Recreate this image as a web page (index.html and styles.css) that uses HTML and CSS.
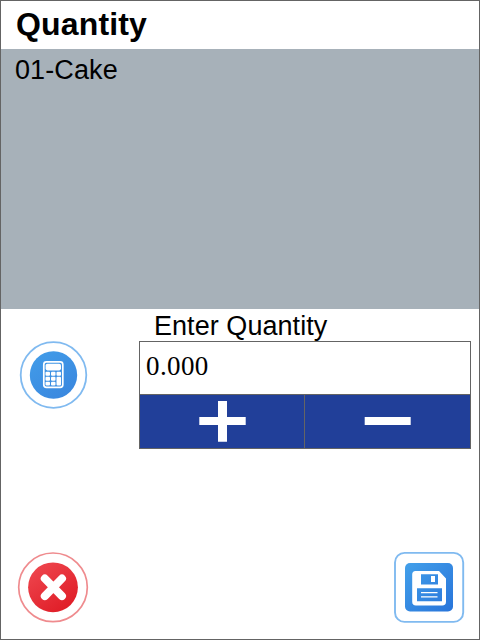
FILE: index.html
```html
<!DOCTYPE html>
<html lang="en">
<head>
<meta charset="utf-8">
<title>Quantity</title>
<link rel="stylesheet" href="styles.css">
</head>
<body>
<main class="screen">
  <h1 class="title">Quantity</h1>
  <section class="item">01-Cake</section>
  <section class="entry">
    <button class="icon-button calc" aria-label="Calculator">
      <svg width="70" height="70" viewBox="0 0 70 70">
        <defs><linearGradient id="blue" x1="0" y1="0" x2="0.7" y2="1"><stop offset="0" stop-color="#429de9"/><stop offset="1" stop-color="#3a88df"/></linearGradient></defs>
        <circle cx="34.5" cy="35" r="32.8" fill="#fff" stroke="#80baf0" stroke-width="1.8"/>
        <circle cx="34.5" cy="35" r="23.7" fill="url(#blue)"/>
        <rect x="24.8" y="21.8" width="19" height="25.6" rx="2.6" fill="none" stroke="#fff" stroke-width="1.7"/>
        <g fill="#fff">
          <rect x="26.6" y="23.8" width="15.4" height="6.6" rx="1.8"/>
          <rect x="26.5" y="31.8" width="4.5" height="4" rx="1"/><rect x="32" y="31.8" width="4.5" height="4" rx="1"/><rect x="37.5" y="31.8" width="4.5" height="4" rx="1"/>
          <rect x="26.5" y="36.8" width="4.5" height="4" rx="1"/><rect x="32" y="36.8" width="4.5" height="4" rx="1"/><rect x="37.5" y="36.8" width="4.5" height="8.800" rx="1"/>
          <rect x="26.5" y="41.800" width="4.500" height="3.800" rx="1"/><rect x="32" y="41.800" width="4.500" height="3.800" rx="1"/>
        </g>
      </svg>
    </button>
    <div class="field">
      <label class="label" for="qty">Enter Quantity</label>
      <div class="box">
        <div class="value" id="qty">0.000</div>
        <div class="steps">
          <button class="step" aria-label="Increase">
            <svg width="48" height="41" viewBox="0 0 48 41"><path fill="#fff" d="M20 0h9v16h18.700v8H29v16.700h-9V24H1.300v-8H20z"/></svg>
          </button>
          <button class="step" aria-label="Decrease">
            <svg width="47" height="41" viewBox="0 0 47 41"><path fill="#fff" d="M.7 16h46v8H.7z"/></svg>
          </button>
        </div>
      </div>
    </div>
  </section>
  <footer class="actions">
    <button class="icon-button" aria-label="Cancel">
      <svg width="72" height="72" viewBox="0 0 72 72">
        <defs><linearGradient id="red" x1="0.1" y1="0" x2="0.8" y2="1"><stop offset="0" stop-color="#ef4850"/><stop offset="1" stop-color="#df1b25"/></linearGradient></defs>
        <circle cx="36" cy="36.300" r="34.300" fill="#fff" stroke="#ef8b8e" stroke-width="1.700"/>
        <circle cx="36" cy="36.300" r="24.900" fill="url(#red)"/>
        <path d="M27.800 27.500l17.200 17.600M45 27.500L27.800 45.100" stroke="#fff" stroke-width="8" stroke-linecap="round"/>
      </svg>
    </button>
    <button class="icon-button" aria-label="Save">
      <svg width="72" height="72" viewBox="0 0 72 72">
        <defs><linearGradient id="save" gradientUnits="userSpaceOnUse" x1="12" y1="12" x2="60" y2="60"><stop offset="0" stop-color="#43a0ea"/><stop offset="1" stop-color="#2874da"/></linearGradient></defs>
        <rect x="2" y="1.900" width="68.200" height="69" rx="9.500" fill="#fff" stroke="#80baf0" stroke-width="1.900"/>
        <rect x="12" y="12" width="48" height="48.500" rx="5" fill="url(#save)"/>
        <path d="M22.500 20H46l7 7.500v23.200a3.800 3.800 0 0 1-3.800 3.800H23a3.800 3.800 0 0 1-3.800-3.800V23.500a3.500 3.500 0 0 1 3.300-3.500z" fill="#fff"/>
        <path d="M28 23.200h17V33.500H28zM24 37.300h25v12.900H24z" fill="url(#save)"/>
        <path d="M38 25h4v6h-4zM28 41h16.500v1.300H28zM28 45.300h16.500v1.300H28z" fill="#fff"/>
      </svg>
    </button>
  </footer>
</main>
</body>
</html>
```

FILE: styles.css
```css
* { box-sizing: border-box; }
body { margin: 0; background: #fff; }
button { border: 0; padding: 0; background: none; }
svg { display: block; }

.screen {
  width: 480px;
  height: 640px;
  border: 1px solid #646464;
  display: flex;
  flex-direction: column;
  background: #fff;
  color: #000;
  font-family: "Liberation Sans", Arial, sans-serif;
}
.title {
  margin: 0;
  height: 48px;
  padding-left: 15px;
  font-size: 32px;
  font-weight: bold;
  letter-spacing: 0.15px;
  line-height: 46px;
}
.item {
  height: 260px;
  padding: 5px 14px;
  background: #a7b1b9;
  font-size: 27px;
  letter-spacing: 0.1px;
  line-height: 32px;
}
.entry {
  display: flex;
  justify-content: space-between;
  padding: 0 8px 0 18px;
}
.calc { align-self: flex-start; margin-top: 31px; }
.field { width: 332px; }
.label {
  display: block;
  height: 32px;
  padding-left: 15px;
  font-size: 27px;
  letter-spacing: 0.05px;
  line-height: 34px;
}
.box { border: 1px solid #646464; }
.value {
  height: 52px;
  padding-left: 6px;
  font-family: "Liberation Serif", "Times New Roman", serif;
  font-size: 27px;
  letter-spacing: 0.4px;
  line-height: 48px;
}
.steps {
  display: grid;
  grid-template-columns: 164px 166px;
  height: 54px;
  border-top: 1px solid #646464;
  background: #213f99;
}
.step {
  display: flex;
  align-items: center;
  justify-content: center;
}
.step + .step { border-left: 1px solid #646464; }
.actions {
  display: flex;
  justify-content: space-between;
  margin-top: auto;
  padding: 0 14px 16px 16px;
}
```
